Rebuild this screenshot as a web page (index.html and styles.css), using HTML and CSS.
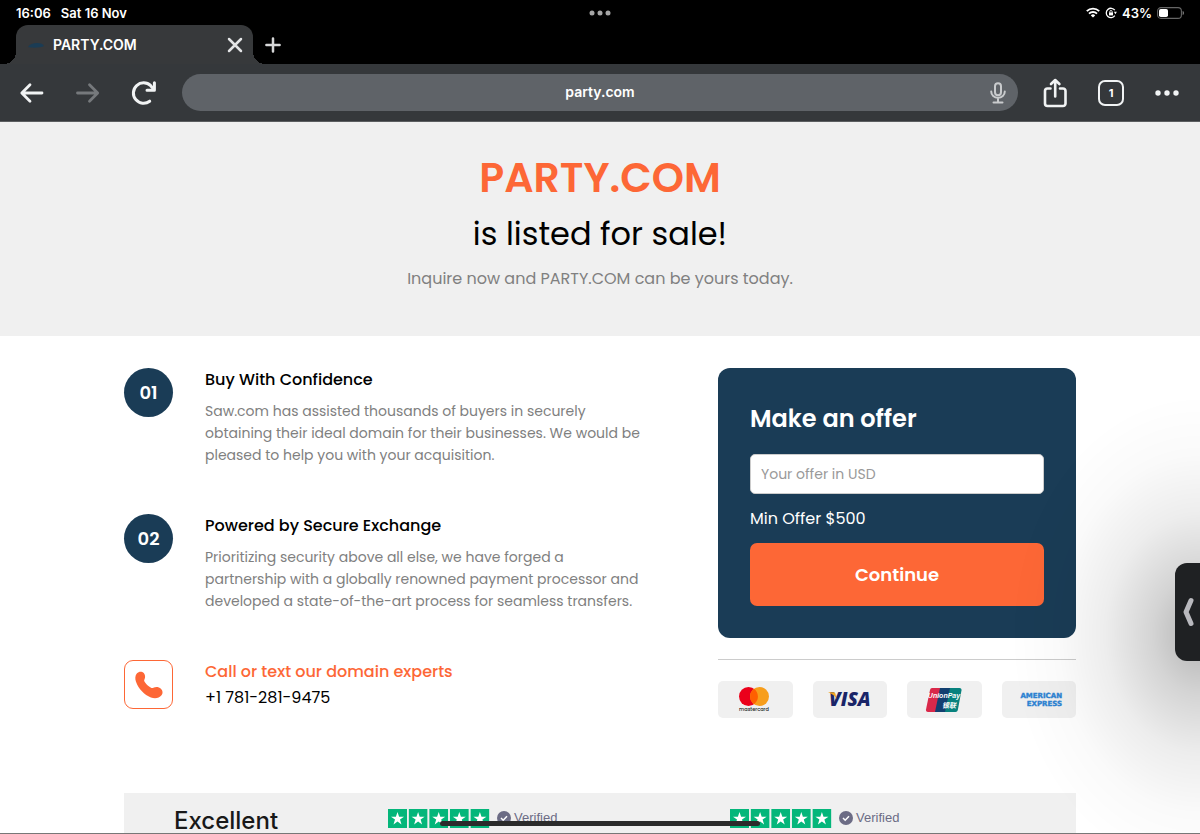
FILE: index.html
```html
<!DOCTYPE html>
<html lang="en">
  <head>
    <meta charset="UTF-8" />
    <meta name="viewport" content="width=device-width, initial-scale=1.0" />
    <title>PARTY.COM</title>
    <link rel="stylesheet" href="styles.css">
  </head>
  <body>
    <header class="browser">
      <div class="status-bar">
        <div class="status-left"><span>16:06</span><span>Sat 16 Nov</span></div>
        <svg width="22" height="6" viewBox="0 0 22 6" fill="#a5a5a5">
          <circle cx="3" cy="3" r="2.5" /><circle cx="11" cy="3" r="2.5" /><circle cx="19" cy="3" r="2.5" />
        </svg>
        <div class="status-right">
          <svg width="14" height="11" viewBox="0 0 14 11" fill="none" stroke="#fff" stroke-width="1.9">
            <path d="M.8 4.1a8.9 8.9 0 0 1 12.4 0M3 6.6a5.8 5.8 0 0 1 8 0" />
            <path d="M7 10.6 4.8 8.4a3.2 3.2 0 0 1 4.4 0z" fill="#fff" stroke="none" />
          </svg>
          <svg width="12" height="12" viewBox="0 0 12 12" fill="none" stroke="#fff" stroke-width="1.3">
            <path d="M9.8 3.2A4.7 4.7 0 1 0 9.8 8.700" />
            <path d="M8.900 4.800h3L10.400 7.200z" fill="#fff" stroke="none" />
            <rect x="4" y="5.4" width="4" height="3" fill="#fff" stroke="none" />
            <path d="M4.8 5.6V4.7a1.2 1.2 0 0 1 2.4 0v.9" stroke-width=".9" />
          </svg>
          <span>43%</span>
          <svg width="27" height="12" viewBox="0 0 27 12">
            <rect x=".6" y=".6" width="23.8" height="10.8" rx="3.4" fill="none" stroke="#666" stroke-width="1.1" />
            <rect x="2" y="2" width="9" height="8" rx="1.8" fill="#fff" />
            <path d="M25.6 4v4c1-.4 1.4-1.1 1.4-2s-.4-1.6-1.4-2z" fill="#777" />
          </svg>
        </div>
      </div>

      <div class="tab-row">
        <div class="tab">
          <svg width="16" height="8" viewBox="0 0 16 8"><path d="M0 6c2-3 5-4 9-4s6 1 7 3c-3 2-13 2-16 1z" fill="#1b3c54" /></svg>
          <span class="tab-title">PARTY.COM</span>
          <button class="icon-btn" aria-label="Close tab">
            <svg width="16" height="16" viewBox="0 0 16 16" fill="none" stroke="#e4e5e6" stroke-width="2.5" stroke-linecap="round"><path d="M2 2l12 12M14 2 2 14" /></svg>
          </button>
        </div>
        <button class="icon-btn" aria-label="New tab">
          <svg width="16" height="16" viewBox="0 0 16 16" fill="none" stroke="#d6d7d8" stroke-width="2.5" stroke-linecap="round"><path d="M8 1.4v13.200M1.400 8h13.200" /></svg>
        </button>
      </div>

      <nav class="toolbar">
        <button class="icon-btn" aria-label="Back">
          <svg width="26" height="26" viewBox="0 0 26 26" fill="none" stroke="#f1f3f4" stroke-width="2.8" stroke-linecap="round" stroke-linejoin="round"><path d="M23 13H3M11 4.800 2.800 13l8.200 8.200" /></svg>
        </button>
        <button class="icon-btn" aria-label="Forward">
          <svg width="26" height="26" viewBox="0 0 26 26" fill="none" stroke="#76797c" stroke-width="2.8" stroke-linecap="round" stroke-linejoin="round"><path d="M2.500 13H22M14.500 4.800l8.200 8.200-8.200 8.200" /></svg>
        </button>
        <button class="icon-btn" aria-label="Reload">
          <svg width="26" height="26" viewBox="0 0 26 26" fill="none" stroke="#f1f3f4" stroke-width="3" stroke-linecap="round"><path d="M18.700 21.200A10.200 10.200 0 1 1 19.700 5.700L22.500 9" /><path d="M23.400 2.800v7.400H16" stroke-linejoin="round" /></svg>
        </button>
        <div class="address-bar">
          <span class="address">party.com</span>
          <button class="icon-btn" aria-label="Voice search">
            <svg width="16" height="22" viewBox="0 0 16 22" fill="none" stroke="#c9cbcd" stroke-width="2" stroke-linecap="round"><rect x="5" y="1.2" width="6" height="12" rx="3" /><path d="M1.200 9.500a6.800 6.300 0 0 0 13.600 0M8 16v4M3.500 20.600h9" /></svg>
          </button>
        </div>
        <button class="icon-btn" aria-label="Share">
          <svg width="26" height="30" viewBox="0 0 26 30" fill="none" stroke="#f1f3f4" stroke-width="2.6" stroke-linecap="round" stroke-linejoin="round"><path d="M8.500 10.500H5.500a2.500 2.500 0 0 0-2.500 2.500v12.500A2.500 2.500 0 0 0 5.500 28h15.500a2.500 2.500 0 0 0 2.500-2.500V13a2.500 2.500 0 0 0-2.500-2.500h-3M13.200 18.500V2.500M9 6l4.200-4 4.200 4" /></svg>
        </button>
        <button class="icon-btn tab-count" aria-label="Show tabs">1</button>
        <button class="icon-btn" aria-label="Menu">
          <svg width="26" height="6" viewBox="0 0 26 6" fill="#f1f3f4"><circle cx="4" cy="3" r="2.7" /><circle cx="13" cy="3" r="2.7" /><circle cx="22" cy="3" r="2.7" /></svg>
        </button>
      </nav>
    </header>

    <main class="page">
      <section class="hero">
        <h1>PARTY.COM</h1>
        <h2>is listed for sale!</h2>
        <p>Inquire now and PARTY.COM can be yours today.</p>
      </section>

      <div class="container content">
        <section class="features">
          <article class="feature">
            <span class="number">01</span>
            <div class="feature-text">
              <h3>Buy With Confidence</h3>
              <p>Saw.com has assisted thousands of buyers in securely<br />
                obtaining their ideal domain for their businesses. We would be<br />
                pleased to help you with your acquisition.</p>
            </div>
          </article>
          <article class="feature">
            <span class="number">02</span>
            <div class="feature-text">
              <h3>Powered by Secure Exchange</h3>
              <p>Prioritizing security above all else, we have forged a<br />
                partnership with a globally renowned payment processor and<br />
                developed a state-of-the-art process for seamless transfers.</p>
            </div>
          </article>
          <article class="feature">
            <span class="phone-icon">
              <svg width="30" height="30" viewBox="0 0 30 30" fill="#fd6736"><path d="M3 3.200C4.700 1.300 8 1 9.800 3.100c1.400 1.700 1.800 4.300.7 6.200-.7 1.300-.3 2.100.8 3.500 1.500 2 3.300 3.600 5.300 4.700 1.300.8 2 .7 3.300 0 2.300-1.100 5.200-.6 7 1.300 2 2 2.200 4.500.6 6.500-2.400 3-6.500 3.700-10.600 2.200C10.300 25 4.600 19 2 11.800.9 8.600 1 5.500 3 3.200z" /></svg>
            </span>
            <div class="feature-text">
              <h3 class="call">Call or text our domain experts</h3>
              <a href="tel:+17812819475">+1 781-281-9475</a>
            </div>
          </article>
        </section>

        <aside class="sidebar">
          <form class="offer">
            <h2><label for="offer">Make an offer</label></h2>
            <input type="text" id="offer" placeholder="Your offer in USD" />
            <p>Min Offer $500</p>
            <button type="button">Continue</button>
          </form>
          <div class="payments">
            <div class="card">
              <svg width="34" height="28" viewBox="0 0 34 28" role="img" aria-label="mastercard">
                <circle cx="10.500" cy="10.500" r="9.500" fill="#eb001b" /><circle cx="21.500" cy="10.500" r="9.500" fill="#f79e1b" />
                <path d="M16 2.800a9.500 9.500 0 0 1 0 15.400 9.500 9.500 0 0 1 0-15.400z" fill="#ff5f00" />
                <text x="16" y="25" text-anchor="middle" font-size="5" font-weight="500" fill="#222">mastercard</text>
              </svg>
            </div>
            <div class="card">
              <svg width="50" height="30" viewBox="0 0 50 30" role="img" aria-label="VISA">
                <text x="4" y="21" font-family="Open Sans" font-size="19" font-weight="800" font-style="italic" fill="#1a2568">VISA</text>
                <path d="M3 7.300h5.400c1.300 0 1.800.5 2.100 1.600l1 5.100C10 10.800 7 8.600 3 7.300z" fill="#f0a422" />
              </svg>
            </div>
            <div class="card">
              <svg width="38" height="24" viewBox="0 0 38 24" role="img" aria-label="UnionPay">
                <path d="M7 0h9l-5 24H3c-1.500 0-2.300-1-2-2.500L5 2c.3-1.200 1-2 2-2z" fill="#d9284a" />
                <path d="M15 0h11l-5 24H10z" fill="#123f70" />
                <path d="M25 0h9.500c1.500 0 2.200 1 2 2.300L32.800 22c-.3 1.200-1 2-2.300 2H20z" fill="#08827e" />
                <text x="19" y="10" text-anchor="middle" font-family="Liberation Sans" font-size="7" font-weight="700" font-style="italic" fill="#fff">UnionPay</text>
                <text x="24" y="20" text-anchor="middle" font-family="Noto Sans CJK SC" font-size="7" font-weight="700" font-style="italic" fill="#fff">银联</text>
              </svg>
            </div>
            <div class="card">
              <svg width="52" height="20" viewBox="0 0 52 20" font-family="DejaVu Sans" font-size="7" font-weight="700" fill="#2d83d3" stroke="#2d83d3" stroke-width=".4" role="img" aria-label="American Express">
                <text x="49" y="8" text-anchor="end">AMERICAN</text>
                <text x="49" y="16" text-anchor="end">EXPRESS</text>
              </svg>
            </div>
          </div>
        </aside>
      </div>

      <section class="container reviews">
        <strong>Excellent</strong>
        <div class="review">
          <svg class="stars" width="102" height="19" viewBox="0 0 102 19"><use href="#five-stars" /></svg>
          <svg width="14" height="14" viewBox="0 0 14 14"><use href="#check" /></svg>
          <span>Verified</span>
        </div>
        <div class="review">
          <svg class="stars" width="102" height="19" viewBox="0 0 102 19"><use href="#five-stars" /></svg>
          <svg width="14" height="14" viewBox="0 0 14 14"><use href="#check" /></svg>
          <span>Verified</span>
        </div>
      </section>
    </main>

    <div class="edge-shade"></div>
    <button class="side-handle" aria-label="Open side panel">
      <svg width="14" height="30" viewBox="0 0 14 30" fill="none" stroke="#b9b9be" stroke-width="5" stroke-linecap="round" stroke-linejoin="round"><path d="M10 3.500 5 15l5 11.500" /></svg>
    </button>
    <div class="home-indicator"></div>

    <svg class="symbols" width="0" height="0">
      <symbol id="star" viewBox="0 0 19 19">
        <rect width="19" height="19" fill="#04b67a" />
        <path d="M9.500 3l1.600 4.700H16l-4 2.900 1.500 4.800-4-2.900-4 2.900L7 10.600 3 7.700h4.900z" fill="#fff" />
      </symbol>
      <symbol id="five-stars" viewBox="0 0 102 19">
        <use href="#star" x="0" width="19" height="19" /><use href="#star" x="20.600" width="19" height="19" /><use href="#star" x="41.200" width="19" height="19" /><use href="#star" x="61.800" width="19" height="19" /><use href="#star" x="82.400" width="19" height="19" />
      </symbol>
      <symbol id="check" viewBox="0 0 14 14">
        <circle cx="7" cy="7" r="7" fill="#6c6c85" />
        <path d="M4 7l2.200 2.200L10 5.200" fill="none" stroke="#fff" stroke-width="1.5" />
      </symbol>
    </svg>
  </body>
</html>
```
FILE: styles.css
```css
* {
  box-sizing: border-box;
}

body {
  margin: 0;
  height: 100vh;
  display: flex;
  flex-direction: column;
  overflow: hidden;
  background-color: #fff;
  border-bottom: 1px solid #777;
  font-family: Poppins, Inter, sans-serif;
  color: #000;
}

h1,
h2,
h3,
p {
  margin: 0;
}

svg {
  display: block;
  flex-shrink: 0;
}

button,
input {
  font-family: inherit;
}

.symbols {
  position: absolute;
}

/* Browser chrome */
.browser {
  flex-shrink: 0;
  background-color: #000;
  color: #fff;
  font-family: Inter, sans-serif;
}

.icon-btn {
  display: flex;
  align-items: center;
  justify-content: center;
  padding: 0;
  border: none;
  background: none;
  color: inherit;
  cursor: pointer;
}

.status-bar {
  display: grid;
  grid-template-columns: 1fr auto 1fr;
  align-items: center;
  height: 25px;
  padding: 0 16px;
  font-size: 13px;
  line-height: 16px;
  font-weight: 600;
}

.status-left,
.status-right {
  display: flex;
  align-items: center;
}

.status-left {
  gap: 10px;
}

.status-right {
  justify-content: flex-end;
  gap: 5px;
}

.tab-row {
  display: flex;
  align-items: center;
  gap: 12px;
  height: 39px;
  padding-left: 16px;
}

.tab {
  position: relative;
  display: flex;
  align-items: center;
  gap: 9px;
  width: 237px;
  height: 39px;
  padding: 0 10px 0 12px;
  border-radius: 12px 12px 0 0;
  background-color: #37393b;
}

.tab::before,
.tab::after {
  content: "";
  position: absolute;
  bottom: 0;
  width: 12px;
  height: 12px;
}

.tab::before {
  left: -12px;
  background: radial-gradient(circle at 0 0, transparent 12px, #37393b 12px);
}

.tab::after {
  right: -12px;
  background: radial-gradient(circle at 100% 0, transparent 12px, #37393b 12px);
}

.tab-title {
  flex: 1;
  font-size: 14px;
  font-weight: 600;
}

.toolbar {
  display: flex;
  align-items: center;
  gap: 30px;
  height: 58px;
  padding: 0 20px 0 19px;
  background-color: #35383b;
  border-bottom: 1px solid #5c5e60;
}

.address-bar {
  flex: 1;
  display: flex;
  align-items: center;
  height: 37px;
  padding: 0 12px 0 28px;
  margin: 0 -6px 0 -5px;
  border-radius: 20px;
  background-color: #5f6368;
}

.address {
  flex: 1;
  padding-bottom: 2px;
  text-align: center;
  font-size: 14px;
  font-weight: 600;
}

.tab-count {
  width: 26px;
  height: 26px;
  border: 2px solid #f1f3f4;
  border-radius: 7px;
  font-size: 11px;
  font-weight: 700;
}

/* Hero */
.page {
  flex: 1;
  min-height: 0;
  overflow: hidden;
}

.hero {
  padding: 28px 20px 41px;
  background-color: #f0f0f0;
  text-align: center;
}

.hero h1 {
  color: #fd6736;
  font-size: 41px;
  line-height: 56px;
  font-weight: 600;
}

.hero h2 {
  font-size: 32px;
  line-height: 56px;
  font-weight: 400;
}

.hero p {
  color: #808080;
  font-size: 16px;
  line-height: 33px;
}

/* Main content */
.container {
  max-width: 952px;
  margin: 0 auto;
}

.content {
  display: grid;
  grid-template-columns: 1fr 358px;
  gap: 32px;
  padding: 32px 0 75px;
}

.features {
  display: flex;
  flex-direction: column;
  gap: 48px;
}

.feature {
  display: flex;
  gap: 32px;
}

.number,
.phone-icon {
  flex-shrink: 0;
  display: flex;
  align-items: center;
  justify-content: center;
  width: 49px;
  height: 49px;
}

.number {
  border-radius: 50%;
  background-color: #1a3c56;
  color: #fff;
  font-size: 18px;
  font-weight: 600;
}

.phone-icon {
  border: 1px solid #fd6736;
  border-radius: 9px;
}

.feature h3 {
  margin-bottom: 8px;
  font-size: 16px;
  line-height: 24px;
  font-weight: 500;
}

.feature p {
  color: #808080;
  font-size: 14px;
  line-height: 22px;
}

.feature .call {
  margin-bottom: 1px;
  color: #fd6736;
}

.feature a {
  color: #000;
  font-size: 16px;
  line-height: 24px;
  text-decoration: none;
}

/* Offer card */
.offer {
  padding: 32px;
  border-radius: 12px;
  background-color: #1a3c56;
  color: #fff;
}

.offer h2 {
  margin-bottom: 16px;
  font-size: 24px;
  line-height: 38px;
  font-weight: 600;
}

.offer input {
  display: block;
  width: 100%;
  height: 40px;
  padding: 0 10px;
  border: 1px solid #ccc;
  border-radius: 5px;
  background-color: #fff;
  font-size: 14px;
}

.offer input::placeholder {
  color: #999;
}

.offer p {
  padding: 12px 0;
  font-size: 16px;
  line-height: 25px;
}

.offer button {
  display: block;
  width: 100%;
  height: 63px;
  border: none;
  border-radius: 7px;
  background-color: #fd6736;
  color: #fff;
  font-size: 18px;
  font-weight: 600;
  cursor: pointer;
}

.payments {
  display: grid;
  grid-template-columns: repeat(4, 1fr);
  gap: 20px;
  margin-top: 21px;
  padding-top: 21px;
  border-top: 1px solid #ccc;
}

.card {
  display: flex;
  align-items: center;
  justify-content: center;
  height: 37px;
  border-radius: 5px;
  background-color: #f0f0f0;
}

/* Reviews */
.reviews {
  display: grid;
  grid-template-columns: 214px 342px 1fr;
  align-items: start;
  padding: 14px 0 20px 50px;
  background-color: #f0f0f0;
}

.reviews strong {
  color: #191919;
  font-family: Inter, sans-serif;
  font-size: 24px;
  line-height: 28px;
  font-weight: 500;
}

.review {
  display: flex;
  align-items: center;
  gap: 3px;
  color: #6c6c85;
  font-family: "Liberation Sans", sans-serif;
  font-size: 13px;
  line-height: 22px;
}

.stars {
  margin-right: 4px;
}

/* Overlays */
.edge-shade {
  position: fixed;
  top: 335px;
  right: 0;
  bottom: 1px;
  width: 200px;
  background: radial-gradient(ellipse 190px 240px at 100% 60%, rgba(0, 0, 0, 0.3), rgba(0, 0, 0, 0.17) 25%, rgba(0, 0, 0, 0.07) 50%, rgba(0, 0, 0, 0.02) 75%, transparent);
  pointer-events: none;
}

.side-handle {
  position: fixed;
  top: 563px;
  right: 0;
  display: flex;
  align-items: center;
  justify-content: flex-end;
  width: 25px;
  height: 98px;
  padding: 0 5px;
  border: none;
  border-radius: 12px 0 0 12px;
  background-color: #1f2123;
}

.home-indicator {
  position: fixed;
  bottom: 8px;
  left: 50%;
  width: 320px;
  height: 5px;
  margin-left: -160px;
  border-radius: 3px;
  background-color: #2b2b2b;
}
```
